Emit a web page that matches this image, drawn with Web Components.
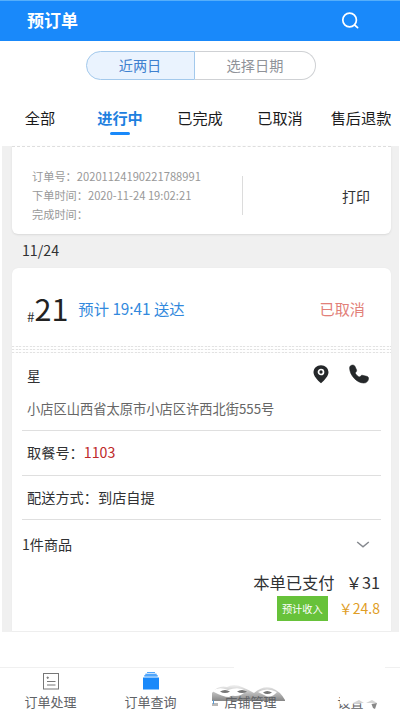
<!DOCTYPE html>
<html lang="zh-CN">
<head>
<meta charset="utf-8">
<title>预订单</title>
<style>
body{margin:0;background:#fff;font-family:"Noto Sans CJK SC","Noto Sans",sans-serif;color:#303133}
</style>
</head>
<body>
<order-app></order-app>
<script>
function define(name, html){
  const t=document.createElement('template');
  t.innerHTML=html;
  customElements.define(name, class extends HTMLElement{
    constructor(){
      super();
      this.attachShadow({mode:'open'}).append(t.content.cloneNode(true));
    }
  });
}

define('app-header',`<style>
:host{display:flex;box-sizing:border-box;height:41px;border-top:1px solid #55aefa;background:#1989fa;padding:0 40px 0 27px;justify-content:space-between;align-items:center;color:#fff;font-size:17px;font-weight:700;line-height:36px;white-space:nowrap}
span{margin-top:-3px}svg{display:block}
</style><span><slot></slot></span>
<svg width="20" height="20" viewBox="0 0 20 20" fill="none" stroke="#fff" stroke-width="1.7" stroke-linecap="round"><circle cx="9.6" cy="9" r="6.8"/><path d="M14.6 14l3 2.7"/></svg>`);

define('date-switch',`<style>
:host{display:flex;width:230px;height:29px;margin:10px 0 0 86px;box-sizing:border-box;font-size:14.200px;line-height:27px;text-align:center}
div{box-sizing:border-box;border:1px solid #cfd1d4;height:29px}
.on{width:109px;border:1px solid #a3c9ec;background:#eaf3fe;color:#3e80cf;border-radius:15px 0 0 15px;padding-right:1px}
.off{width:121px;border-left:0;color:#909399;border-radius:0 15px 15px 0}
</style><div class="on"><slot name="on"></slot></div><div class="off"><slot name="off"></slot></div>`);

define('tab-item',`<style>
:host{display:flex;flex-direction:column;align-items:center;font-size:15.200px;line-height:22px;color:#1b1b1c;white-space:nowrap}
:host([active]){color:#1e80df;font-weight:700}
i{width:20px;height:3px;border-radius:2px;margin-top:4px}
:host([active]) i{background:#1989fa}
</style><slot></slot><i></i>`);

define('tab-bar',`<style>
:host{display:grid;grid-template-columns:80px 80px 80px 80px 82px;height:39px;padding-top:26px}
</style><slot></slot>`);

define('order-meta',`<style>
:host{display:flex;box-sizing:border-box;height:87.5px;background:#fff;margin:1px 9px 0 12px;border-top:1.5px dashed #dedede;border-radius:0 0 6px 6px;padding:20px 21px 0 20px;box-shadow:0 1px 2px #d9d9d9;align-items:flex-start;white-space:nowrap}
.l{width:210px;font-size:11.2px;line-height:19px;color:#999}
.b{width:1px;height:39px;background:#dcdcdc;margin-top:9px}
.p{margin-left:auto;font-size:14px;line-height:22px;margin-top:18px;color:#303133}
</style><div class="l"><slot></slot></div><div class="b"></div><div class="p"><slot name="action"></slot></div>`);

define('info-row',`<style>
:host{display:block;box-sizing:border-box;margin:0 10px;padding-left:5px;height:44.5px;border-bottom:1px solid #dfdfdf;font-size:14.2px;line-height:43px;color:#303133;white-space:nowrap}
::slotted(b){font-weight:400;color:#be2a2a}
</style><slot></slot>`);

define('order-head',`<style>
:host{display:flex;height:78px;white-space:nowrap}
.h{font-size:13.500px;line-height:20px;margin:38px 0 0 15px}
.n{font-size:30.500px;line-height:40px;margin-top:20px;color:#222}
.t{font-size:15.3px;line-height:24px;margin:28px 0 0 10px;color:#3289dd}
.s{font-size:15.200px;line-height:24px;margin:28px 26px 0 auto;color:#e28079}
</style><div class="h">#</div><div class="n"><slot name="no"></slot></div><div class="t"><slot name="time"></slot></div><div class="s"><slot name="state"></slot></div>`);

define('tear-line',`<style>
:host{display:flex;flex-direction:column;gap:2px;height:8px}
i{height:1px;background:repeating-linear-gradient(90deg,#e2e2e2 0 2px,#fafafa 2px 3.5px)}
</style><i></i><i></i><i></i>`);

define('customer-box',`<style>
:host{display:block;box-sizing:border-box;height:77px;margin:0 10px;padding:6px 12px 0 5px;border-bottom:1px solid #dfdfdf;white-space:nowrap}
.r{display:flex;align-items:center;height:30px;font-size:13.500px;line-height:30px}
.pin{margin-left:auto}.tel{margin-left:19px}
svg{display:block;position:relative;top:-1px}
.a{font-size:13.25px;line-height:24px;color:#666;margin-top:7px}
</style><div class="r"><slot name="name"></slot>
<svg class="pin" width="18" height="20" viewBox="0 0 18 20"><path fill="#25282a" d="M9 1.2C4.8 1.2 1.5 4.3 1.5 8.3c0 3.5 3.7 7.7 7.5 11 3.8-3.3 7.5-7.5 7.5-11 0-4-3.300-7.100-7.500-7.100z"/><circle cx="9" cy="8" r="2.5" fill="#25282a" stroke="#fff" stroke-width="1.7"/></svg>
<svg class="tel" width="20" height="20" viewBox="0 0 20 20"><path fill="#25282a" stroke="#25282a" stroke-width=".6" stroke-linejoin="round" d="M.6 4.200C.5 2.300 2 1.100 3.700 1.100c1.300 0 2 .7 2.500 1.800l1.200 2.600c.5 1.200.1 2-.5 2.600-.6.600-.7.900-.4 1.500.7 1.400 1.700 2.400 3.200 3.100.7.400 1.200.2 1.700-.4.700-.9 1.400-1.200 2.600-.9l3.600.9c1.400.4 2.100 1.100 1.900 2.500-.3 2.600-2.200 4.200-4.800 4.200C7.700 18.900 1 11.500.6 4.200z"/></svg></div>
<div class="a"><slot></slot></div>`);

define('goods-total',`<style>
:host{display:block;height:111px;padding:0 11px 0 10px;white-space:nowrap}
.g{display:flex;justify-content:space-between;height:48px;line-height:48px;font-size:14.1px}
svg{margin:19px 10px 0 0}
.r{display:flex;justify-content:flex-end;align-items:center}
.p{height:28px;line-height:26px;font-size:16.3px;gap:11px}
.e{height:25px;font-size:14px;line-height:25px;color:#df9e26;gap:11px}
.tag{background:#67c23a;color:#fff;font-size:10.200px;width:51px;height:25px;line-height:25px;text-align:center}
</style><div class="g"><span><slot name="count"></slot></span><svg width="14" height="11" viewBox="0 0 14 11" fill="none" stroke="#85888e" stroke-width="1.5"><path d="M1.200 3l5.800 4.800L12.800 3"/></svg></div>
<div class="r p"><span><slot name="paid"></slot></span><span><slot name="amount"></slot></span></div>
<div class="r e"><span class="tag"><slot name="tag"></slot></span><span><slot name="income"></slot></span></div>`);

define('order-card',`<style>
:host{display:block;height:363px;overflow:hidden;background:#fff;margin:0 9px 0 12px;border-radius:6px 6px 0 0;box-shadow:0 0 1px #ddd}
</style><slot></slot>`);

define('nav-item',`<style>
:host{display:flex;flex-direction:column;align-items:center;font-size:13px;line-height:16px;color:#606266;white-space:nowrap}
:host([raised]){position:relative;z-index:1}
.i{height:26px;width:20px}::slotted(svg){display:block}
</style><div class="i"><slot name="icon"></slot></div><slot></slot>`);

define('bottom-nav',`<style>
:host{display:grid;position:relative;grid-template-columns:repeat(4,100px);box-sizing:border-box;height:44px;border-top:1px solid #f0f0f0;margin-top:35px;padding-left:.5px}
svg{position:absolute;left:204px;top:-8px}
</style><slot></slot>
<svg width="196" height="52" viewBox="0 0 196 52"><defs><filter id="f"><feGaussianBlur stdDeviation=".7"/></filter><linearGradient id="d" x1="0" y1="0" x2="0" y2="1"><stop offset="0" stop-color="#f2f2f2"/><stop offset="1" stop-color="#858585"/></linearGradient></defs>
<path fill="#fff" d="M30 0h151v42l-14 1-31 1V25H30z"/>
<g filter="url(#f)"><path fill="url(#d)" d="M8 41v-8q6-8 15-6 7-4 15 0 7 3 12 6 9-8 18-5 8 3 13 12v1z"/><path fill="#fff" d="M8 31q7-5 16-1 11-4 18 1-4 5-11 5-3-1-6 1-6 0-17-6zM54 32q9-5 19 0-5 6-11 4z"/><path fill="#777" d="M16 31.500q5-3 10 0-5 3-10 0zM33 31.500q5-3 10 0-5 3-10 0zM59 32.500q4-3 9 0-5 3-9 0z"/><path fill="#888" opacity=".6" d="M8 43h6v3H8z"/><path fill="#aaa" opacity=".5" d="M149 43l6-3 5 3zM162 43l6-3 5 3z"/><path fill="#888" d="M167.500 44l5.500-1-2 6-2-1z"/></g>
<path stroke="#559ad7" d="M9.500 40v4"/></svg>`);

define('order-app',`<style>
:host{display:block;box-sizing:border-box;width:400px;height:710px;overflow:hidden;background:#fff}
main{box-sizing:border-box;height:486px;margin:0 1px 0 2px;background:#f0f0f0}
main>*{margin-left:10px;margin-right:8px}
.date{height:34.500px;line-height:33px;font-size:14.200px;margin:0 0 0 20px;color:#303133}
</style>
<app-header>预订单</app-header>
<date-switch><span slot="on">近两日</span><span slot="off">选择日期</span></date-switch>
<tab-bar><tab-item>全部</tab-item><tab-item active>进行中</tab-item><tab-item>已完成</tab-item><tab-item>已取消</tab-item><tab-item>售后退款</tab-item></tab-bar>
<main>
<order-meta>订单号：20201124190221788991<br>下单时间：2020-11-24 19:02:21<br>完成时间：<span slot="action">打印</span></order-meta>
<div class="date">11/24</div>
<order-card>
<order-head><span slot="no">21</span><span slot="time">预计 19:41 送达</span><span slot="state">已取消</span></order-head>
<tear-line></tear-line>
<customer-box><span slot="name">星</span>小店区山西省太原市小店区许西北街555号</customer-box>
<info-row>取餐号：<b>1103</b></info-row>
<info-row>配送方式：到店自提</info-row>
<goods-total><span slot="count">1件商品</span><span slot="paid">本单已支付</span><span slot="amount">￥31</span><span slot="tag">预计收入</span><span slot="income">￥24.8</span></goods-total>
</order-card>
</main>
<bottom-nav>
<nav-item><svg slot="icon" width="20" height="22" viewBox="0 0 20 22" fill="none" stroke="#777" stroke-width="1"><rect x="2.500" y="5.500" width="15" height="15.500"/><path d="M6 13.500h8.500M6 17h8.500"/><circle cx="6.700" cy="9.700" r=".7" fill="#777"/></svg>订单处理</nav-item>
<nav-item><svg slot="icon" width="20" height="22" viewBox="0 0 20 22" fill="#1989fa"><path d="M2 9.500h16V21.500H2zM3.300 7.200h13.400v1.200H3.300zM4.300 5.700h11.400v1H4.300zM6 4.300h8v.8H6z"/></svg>订单查询</nav-item>
<nav-item raised>店铺管理</nav-item>
<nav-item>设置</nav-item>
</bottom-nav>`);
</script>
</body>
</html>
